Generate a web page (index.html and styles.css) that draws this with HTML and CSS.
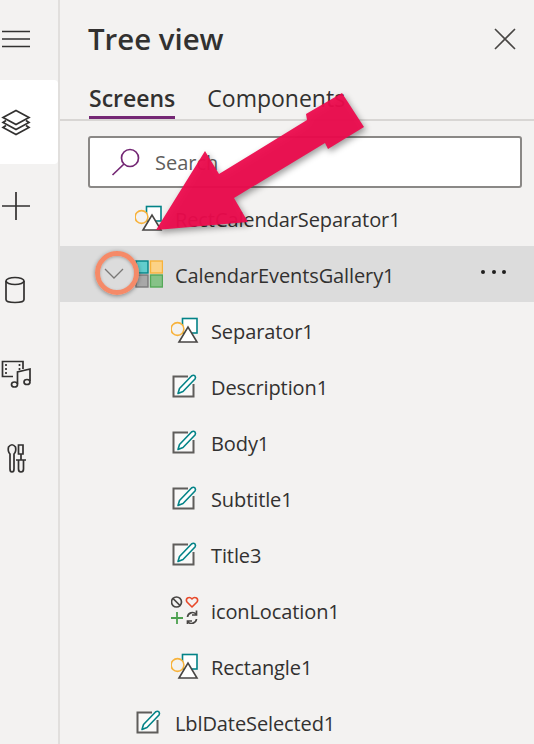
FILE: index.html
```html
<!DOCTYPE html>
<html lang="en">
<head>
    <meta charset="UTF-8">
    <meta name="viewport" content="width=device-width, initial-scale=1.0">
    <title>Tree view</title>
    <link rel="stylesheet" href="styles.css">
</head>
<body>
    <svg class="defs" width="0" height="0">
        <symbol id="shapes" viewBox="0 0 28 28">
            <rect x="11.5" y="2.5" width="14.5" height="14.5" fill="#fff" stroke="#038387" stroke-width="1.6"/>
            <circle cx="6.5" cy="13" r="6.4" fill="#f3f2f1" stroke="#f7b23b" stroke-width="1.6"/>
            <path d="M8 26 L17 11 L26 26 Z" fill="#fff" stroke="#484644" stroke-width="1.6" stroke-linejoin="miter"/>
        </symbol>
        <symbol id="edit" viewBox="0 0 28 28">
            <path d="M22.5 12 V24.5 H2.5 V4.5 H17" fill="#f9f9f8" stroke="#5f5d5b" stroke-width="2"/>
            <path d="M7 21.5 L8.5 16.5 L20.5 4 Q22.5 2.5 24 4 Q25 5.5 24 7 L12 19.5 Z" fill="#fff" stroke="#038387" stroke-width="1.6" stroke-linejoin="round"/>
        </symbol>
        <symbol id="icons" viewBox="0 0 28 28">
            <circle cx="5.5" cy="6" r="5" fill="none" stroke="#484644" stroke-width="1.7"/>
            <path d="M2 2.5 L9 9.5" stroke="#484644" stroke-width="1.7"/>
            <path d="M21 11 L16 6 Q14.5 3.5 16.5 2 Q19 .6 21 3 Q23 .6 25.5 2 Q27.5 3.5 26 6 Z" fill="none" stroke="#e8492a" stroke-width="1.6" stroke-linejoin="round"/>
            <path d="M0 22 H12 M6 16 V28" stroke="#4ca04f" stroke-width="1.8"/>
            <path d="M16.5 21 A5 5 0 0 1 25 18 M25.5 14.5 V19 H21 M25.5 23 A5 5 0 0 1 17 26 M16.5 29 V25 H21" fill="none" stroke="#484644" stroke-width="1.7"/>
        </symbol>
    </svg>

    <div class="app">
        <nav class="rail">
            <div class="rail-item rail-menu">
                <svg class="rail-icon" viewBox="0 0 32 32"><path d="M2 8.5 H30 M2 16 H30 M2 23.5 H30"/></svg>
            </div>
            <div class="rail-item active">
                <svg class="rail-icon" viewBox="0 0 32 32"><path d="M16 4.5 L29 11.5 L16 18.5 L3 11.5 Z M6 14.5 L3 16.5 L16 23.5 L29 16.5 L26 14.5 M6 19.5 L3 21.5 L16 28.5 L29 21.5 L26 19.5"/></svg>
            </div>
            <div class="rail-item">
                <svg class="rail-icon" viewBox="0 0 32 32"><path d="M2 16 H30 M16 2 V30"/></svg>
            </div>
            <div class="rail-item">
                <svg class="rail-icon" viewBox="0 0 32 32"><ellipse cx="15" cy="7" rx="9" ry="3.5"/><path d="M6 7 V25.5 Q6 28.5 15 28.5 Q24 28.5 24 25.5 V7"/></svg>
            </div>
            <div class="rail-item">
                <svg class="rail-icon" viewBox="0 0 32 32"><path d="M23 11 V3.5 H2.5 V18.5 H13 M23 3.5 H2.5"/><path class="ticks" d="M6 6 V17 M19.5 6 V12"/><path d="M17.5 26 V14 L30 11 V23"/><ellipse cx="14.5" cy="26.5" rx="3" ry="2.5"/><ellipse cx="27" cy="24" rx="3" ry="2.5"/></svg>
            </div>
            <div class="rail-item">
                <svg class="rail-icon" viewBox="0 0 32 32"><path d="M10 12 V27 Q10 30 12 30 Q14 30 14 27 V12 Q16.500 9.500 15.500 5 Q12 0.500 8.500 5 Q7.500 9.500 10 12 Z"/><path d="M18.500 3 H23 V12 H18.500 Z M21 12 V18 M16 18 H26 M18.500 18 V27 Q18.500 30 21 30 Q23.500 30 23.500 27 V18"/></svg>
            </div>
        </nav>

        <main class="panel">
            <header class="panel-head">
                <h1>Tree view</h1>
                <svg class="close" viewBox="0 0 22 22"><path d="M1 1 L21 21 M21 1 L1 21"/></svg>
            </header>
            <div class="tabs">
                <span class="tab selected">Screens</span>
                <span class="tab">Components</span>
            </div>
            <div class="search">
                <svg class="search-icon" viewBox="0 0 30 30"><circle cx="19" cy="11" r="8.5"/><path d="M13 17 L1.5 28"/></svg>
                <span>Search</span>
            </div>
            <ul class="tree">
                <li class="row lvl1"><svg class="node"><use href="#shapes"/></svg>RectCalendarSeparator1</li>
                <li class="row gallery">
                    <svg class="chevron" viewBox="0 0 20 12"><path d="M1 1 L10 10 L19 1"/></svg>
                    <svg class="node" viewBox="0 0 28 28">
                        <rect x="1" y="1" width="12" height="12" fill="#62cdcd" stroke="#038387" stroke-width="1.4"/>
                        <rect x="15.5" y="1" width="12" height="12" fill="#fcd286" stroke="#f7b23b" stroke-width="1.4"/>
                        <rect x="1" y="15" width="12" height="12" fill="#a8a8a8" stroke="#7a7a7a" stroke-width="1.4"/>
                        <rect x="15.5" y="15" width="12" height="12" fill="#86c287" stroke="#55a858" stroke-width="1.4"/>
                    </svg>
                    CalendarEventsGallery1
                    <span class="more"><i></i><i></i><i></i></span>
                </li>
                <li class="row lvl2"><svg class="node"><use href="#shapes"/></svg>Separator1</li>
                <li class="row lvl2"><svg class="node"><use href="#edit"/></svg>Description1</li>
                <li class="row lvl2"><svg class="node"><use href="#edit"/></svg>Body1</li>
                <li class="row lvl2"><svg class="node"><use href="#edit"/></svg>Subtitle1</li>
                <li class="row lvl2"><svg class="node"><use href="#edit"/></svg>Title3</li>
                <li class="row lvl2"><svg class="node"><use href="#icons"/></svg>iconLocation1</li>
                <li class="row lvl2"><svg class="node"><use href="#shapes"/></svg>Rectangle1</li>
                <li class="row lvl1"><svg class="node"><use href="#edit"/></svg>LblDateSelected1</li>
            </ul>
        </main>
    </div>

    <!-- annotation drawn over the screenshot -->
    <svg class="arrow" viewBox="0 0 534 744">
        <path d="M156 230 L205 151 L219 174 L307 120 L306 114 L342 93 L364 127 L328 149 L325 143 L234 198 L248 222 Z"/>
    </svg>
    <div class="ring"></div>
</body>
</html>
```

FILE: styles.css
```css
* {
    box-sizing: border-box;
}
html, body {
    margin: 0;
    height: 100%;
}
body {
    position: relative;
    overflow: hidden;
    background: #f3f2f1;
    color: #323130;
    font-family: "Open Sans", sans-serif;
    font-size: 20px;
}
.defs {
    position: absolute;
}
.app {
    display: flex;
    height: 744px;
}

/* left rail */
.rail {
    width: 60px;
    flex: none;
    border-right: 2px solid #e1dfdd;
}
.rail-item {
    height: 84px;
    display: flex;
    align-items: center;
}
.rail-menu {
    height: 80px;
    padding-bottom: 2px;
}
.rail-item.active {
    background: #fff;
    border-radius: 0 4px 4px 0;
}
.rail-icon {
    width: 32px;
    height: 32px;
    fill: none;
    stroke: #323130;
    stroke-width: 1.7;
}
.rail-icon .ticks {
    stroke-dasharray: 2 2;
}

/* panel */
.panel {
    flex: 1;
    min-width: 0;
}
.panel-head {
    height: 78px;
    padding: 0 18px 0 28px;
    display: flex;
    align-items: center;
    justify-content: space-between;
}
.panel-head h1 {
    margin: 0;
    font-size: 29.4px;
    font-weight: 600;
}
.close {
    width: 22px;
    height: 22px;
    fill: none;
    stroke: #484644;
    stroke-width: 1.6;
}
.tabs {
    height: 43px;
    padding-left: 29px;
    display: flex;
    gap: 32px;
    border-bottom: 2px solid #d8d6d4;
}
.tab {
    height: 41px;
    font-size: 23px;
    line-height: 40px;
}
.tab.selected {
    font-weight: 600;
    border-bottom: 3px solid #742774;
}
.search {
    height: 52px;
    margin: 15px 12px 0 28px;
    padding-left: 21px;
    display: flex;
    align-items: center;
    gap: 14px;
    background: #fff;
    border: 2px solid #8a8886;
    border-radius: 3px;
    color: #605e5c;
}
.search-icon {
    width: 30px;
    height: 30px;
    fill: none;
    stroke: #742774;
    stroke-width: 1.7;
}

/* tree */
.tree {
    list-style: none;
    margin: 2px 0 0;
    padding: 0;
}
.row {
    height: 56px;
    padding-top: 2px;
    display: flex;
    align-items: center;
    white-space: nowrap;
    letter-spacing: -0.1px;
}
.lvl1 {
    padding-left: 75px;
}
.lvl2 {
    padding-left: 111px;
}
.gallery {
    padding-left: 44px;
    background: #dcdcdc;
}
.node {
    width: 28px;
    height: 28px;
    flex: none;
    margin-right: 12px;
    margin-bottom: 2px;
}
.chevron {
    width: 20px;
    height: 12px;
    flex: none;
    margin-right: 11px;
    margin-bottom: 2px;
    fill: none;
    stroke: #7a7876;
    stroke-width: 1.3;
}
.more {
    margin-left: auto;
    margin-right: 28px;
    margin-bottom: 7px;
    display: flex;
    gap: 6.5px;
}
.more i {
    width: 4px;
    height: 4px;
    border-radius: 50%;
    background: #201f1e;
}

/* annotation */
.arrow {
    position: absolute;
    left: 0;
    top: 0;
    width: 534px;
    height: 744px;
    fill: #ec0b4d;
    fill-opacity: .95;
    filter: drop-shadow(2px 3px 3px rgba(0, 0, 0, .4));
}
.ring {
    position: absolute;
    left: 95px;
    top: 251px;
    width: 44px;
    height: 44px;
    border: 5px solid #f58a68;
    border-radius: 50%;
    box-shadow: 0 1px 4px rgba(0, 0, 0, .4), inset 0 1px 3px rgba(0, 0, 0, .25);
}
```
